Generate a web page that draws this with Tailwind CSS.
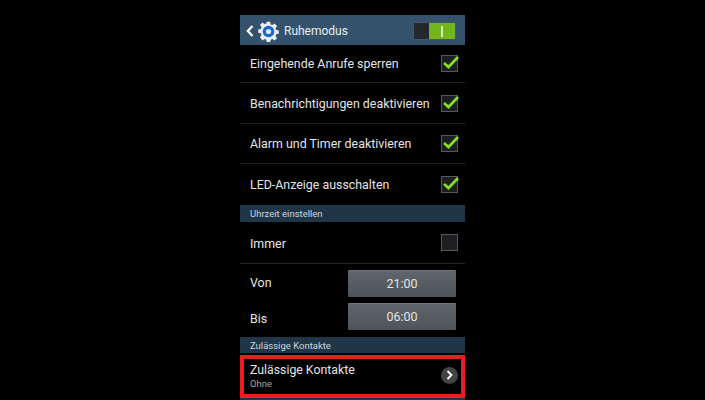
<!DOCTYPE html>
<html lang="de">
<head>
<meta charset="UTF-8">
<title>Ruhemodus</title>
<script src="https://cdn.jsdelivr.net/npm/@tailwindcss/browser@4"></script>
</head>
<body class="bg-black h-[400px] overflow-hidden font-['Roboto',sans-serif] text-[#e4e4e4]">
<div class="w-[225px] ml-[240px] pt-[15px]">
  <!-- action bar -->
  <header class="h-[30px] bg-[#35526c] flex items-center pt-[2px] pl-[6px] pr-[9px]">
    <svg width="8" height="12" viewBox="0 0 8 12" fill="none" stroke="#fff" stroke-width="2.2"><path d="M6.5 1 L1.8 6 L6.5 11"/></svg>
    <svg class="ml-[4px]" width="21" height="21" viewBox="0 0 21 21">
      <path fill="#e8eef4" d="M8.8 0.8h3.4l.5 2.6 1.7.7 2.2-1.5 2.4 2.4-1.5 2.2.7 1.7 2.6.5v3.4l-2.6.5-.7 1.7 1.5 2.2-2.4 2.4-2.2-1.5-1.7.7-.5 2.6H8.8l-.5-2.6-1.7-.7-2.2 1.5L2 16.2l1.5-2.2-.7-1.7-2.6-.5V8.4l2.6-.5.7-1.7L2 4l2.4-2.4 2.2 1.5 1.7-.7z"/>
      <circle cx="10.5" cy="10.5" r="5.8" fill="#1f66c8"/>
      <circle cx="10.5" cy="10.5" r="2.6" fill="#dfe9f5"/>
    </svg>
    <span class="ml-[5px] text-[12px] text-[#e8edf1]">Ruhemodus</span>
    <div class="ml-auto w-[43px] h-[18px] bg-[#23282c] border border-[#4a5560] rounded-[2px] flex justify-end">
      <div class="w-[26px] h-full bg-[#72b51c] flex items-center justify-center"><div class="w-[2px] h-[11px] bg-[#d6eeb0]"></div></div>
    </div>
  </header>

  <div class="h-[38px] pl-[10px] pr-[7px] flex items-center justify-between border-b border-[#222]">
    <span class="text-[12.4px] pt-[2px]">Eingehende Anrufe sperren</span>
    <div class="relative w-[17px] h-[17px] bg-[#1c1e21] border border-[#55595e]">
      <svg class="absolute left-0 -top-[2px]" width="18" height="17" viewBox="0 0 18 17" fill="none" stroke="#84e01e" stroke-width="2.7"><path d="M2 9 L6.5 13 L16 3"/></svg>
    </div>
  </div>
  <div class="h-[41px] pl-[10px] pr-[7px] flex items-center justify-between border-b border-[#222]">
    <span class="text-[12.4px] pt-[2px]">Benachrichtigungen deaktivieren</span>
    <div class="relative w-[17px] h-[17px] bg-[#1c1e21] border border-[#55595e]">
      <svg class="absolute left-0 -top-[2px]" width="18" height="17" viewBox="0 0 18 17" fill="none" stroke="#84e01e" stroke-width="2.7"><path d="M2 9 L6.5 13 L16 3"/></svg>
    </div>
  </div>
  <div class="h-[40px] pl-[10px] pr-[7px] flex items-center justify-between border-b border-[#222]">
    <span class="text-[12.4px] pt-[2px]">Alarm und Timer deaktivieren</span>
    <div class="relative w-[17px] h-[17px] bg-[#1c1e21] border border-[#55595e]">
      <svg class="absolute left-0 -top-[2px]" width="18" height="17" viewBox="0 0 18 17" fill="none" stroke="#84e01e" stroke-width="2.7"><path d="M2 9 L6.5 13 L16 3"/></svg>
    </div>
  </div>
  <div class="h-[41px] pl-[10px] pr-[7px] flex items-center justify-between">
    <span class="text-[12.4px] pt-[2px]">LED-Anzeige ausschalten</span>
    <div class="relative w-[17px] h-[17px] bg-[#1c1e21] border border-[#55595e]">
      <svg class="absolute left-0 -top-[2px]" width="18" height="17" viewBox="0 0 18 17" fill="none" stroke="#84e01e" stroke-width="2.7"><path d="M2 9 L6.5 13 L16 3"/></svg>
    </div>
  </div>

  <div class="h-[17px] bg-[#1f3548] flex items-center pl-[10px] pt-[2px] text-[9.5px] text-[#cfd6dc]">Uhrzeit einstellen</div>

  <div class="h-[42px] pl-[10px] pr-[7px] flex items-center justify-between border-b border-[#222]">
    <span class="text-[12.4px] pt-[4px]">Immer</span>
    <div class="w-[17px] h-[17px] bg-[#1c1e21] border border-[#55595e]"></div>
  </div>

  <div class="flex flex-col pt-[6px] pb-[7px] gap-[6px] pl-[10px] pr-[9px]">
    <div class="flex items-center justify-between">
      <span class="text-[12.4px]">Von</span>
      <div class="w-[108px] h-[27px] rounded-[1px] bg-gradient-to-b from-[#5f656a] to-[#4e5459] border-t border-[#70767c] flex items-center justify-center text-[12.5px]">21:00</div>
    </div>
    <div class="flex items-center justify-between">
      <span class="text-[12.4px] pt-[6px]">Bis</span>
      <div class="w-[108px] h-[27px] rounded-[1px] bg-gradient-to-b from-[#5f656a] to-[#4e5459] border-t border-[#70767c] flex items-center justify-center text-[12.5px]">06:00</div>
    </div>
  </div>

  <div class="h-[16px] bg-[#1f3548] flex items-center pl-[10px] pt-[2px] text-[9.5px] text-[#cfd6dc]">Zulässige Kontakte</div>

  <div class="mt-[2px] h-[43px] border-[4px] border-[#ec1c24] pl-[6px] pr-[3px] flex items-center justify-between">
    <div class="flex flex-col">
      <span class="text-[12.3px] leading-[15px]">Zulässige Kontakte</span>
      <span class="text-[9.5px] leading-[12px] text-[#a0a4a8]">Ohne</span>
    </div>
    <div class="w-[17px] h-[17px] mb-[3px] rounded-full bg-[#424446] flex items-center justify-center">
      <svg width="7" height="10" viewBox="0 0 7 10" fill="none" stroke="#fff" stroke-width="1.8"><path d="M1.5 1 L5.5 5 L1.5 9"/></svg>
    </div>
  </div>
  <div class="h-[2px] bg-[#1f3548]"></div>
</div>
</body>
</html>
